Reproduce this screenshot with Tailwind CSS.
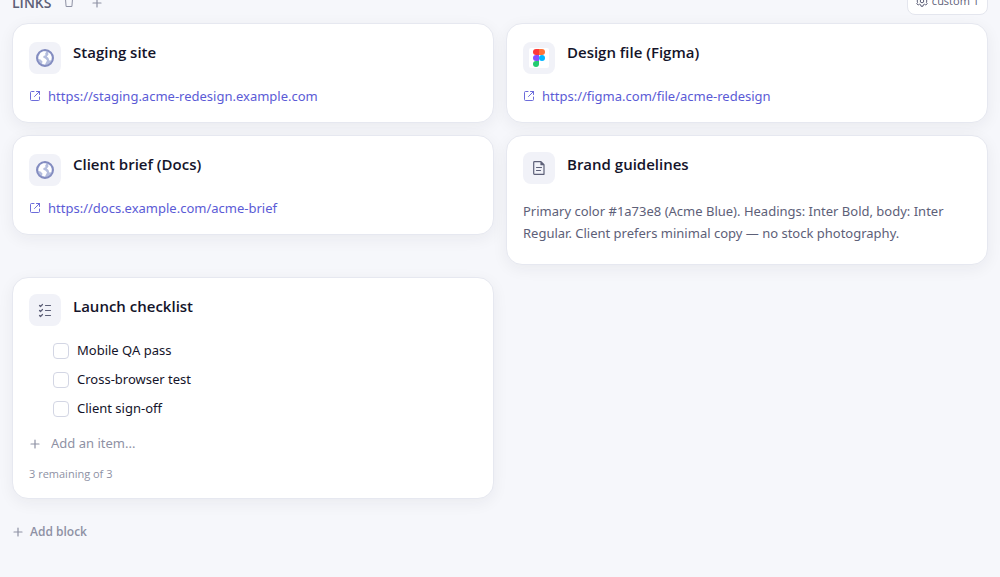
<!DOCTYPE html>
<html lang="en">
<head>
    <meta charset="UTF-8">
    <meta name="viewport" content="width=device-width, initial-scale=1.0">
    <title>Links</title>
    <script src="https://cdn.jsdelivr.net/npm/@tailwindcss/browser@4"></script>
</head>
<body class="bg-[#f6f7fb] font-['Noto_Sans','Open_Sans',sans-serif] min-h-screen overflow-x-hidden text-[#14142a]">
    <!-- shared icons -->
    <svg class="hidden">
        <symbol id="plus" viewBox="0 0 12 12">
            <path d="M6 2v8M2 6h8" fill="none" stroke="currentColor" stroke-width="1.2" stroke-linecap="round" />
        </symbol>
        <symbol id="external" viewBox="0 0 12 12">
            <path d="M5 1.500H2.500a1 1 0 0 0-1 1v7a1 1 0 0 0 1 1h7a1 1 0 0 0 1-1V7M7.500 1.500h3v3M10.500 1.500L5.500 6.500" fill="none" stroke="currentColor" stroke-width="0.9" stroke-linecap="round" stroke-linejoin="round" />
        </symbol>
        <symbol id="globe" viewBox="0 0 20 20">
            <circle cx="10" cy="10" r="8" fill="#b4bddd" stroke="#838cc0" stroke-width="2" />
            <path d="M3.500 8.500L5.500 4.800 8.500 3.200 11.500 3.500 10.200 5.500 10.500 7.200 8.500 8 8.200 9.500 10.500 10.800 12 12.500 11 14.500 10 16.500 7 15.800 7.500 13.500 5.500 11.500 3.500 11Z" fill="#fff" />
            <path d="M13 4.200L15.500 6 16.700 9 16.300 12.300 14.300 12.500 13.500 10 11.800 8.500 13.500 6.500Z" fill="#fff" />
        </symbol>
    </svg>

    <main class="-mt-[13px] px-3 pb-8">
        <header class="flex items-center justify-between h-7 mb-2">
            <div class="flex items-center pt-1 text-[#8e91a4]">
                <h2 class="font-['Open_Sans'] font-semibold text-[14px] leading-5 text-[#5d6078]">LINKS</h2>
                <button type="button" aria-label="Delete section" class="ml-3">
                    <svg class="size-3" viewBox="0 0 12 12" fill="none" stroke="currentColor" stroke-linecap="round" stroke-linejoin="round">
                        <path d="M1.500 2h9M4.500 2V1h3v1M2.500 2l.6 7.500h5.800L9.500 2" />
                    </svg>
                </button>
                <button type="button" aria-label="Add link" class="ml-4"><svg class="size-3"><use href="#plus" /></svg></button>
            </div>
            <button type="button" class="flex items-center gap-1 h-7 px-2 bg-white border border-[#e4e6ee] rounded-lg font-['Open_Sans'] text-[11px] font-medium text-[#5d6078]">
                <svg class="size-3" viewBox="0 0 24 24" fill="none" stroke="currentColor" stroke-width="2" stroke-linejoin="round">
                    <path d="M10 1.500h4l.7 3 2.300 1 2.700-1.600 2.700 2.800L20.800 9.300l.9 2.700-.9 2.700 1.600 2.600-2.700 2.800-2.700-1.600-2.300 1-.7 3h-4l-.7-3-2.300-1-2.700 1.600-2.700-2.800 1.600-2.600L2.300 12l.9-2.700-1.600-2.600 2.700-2.800L7 5.500l2.300-1z" />
                    <circle cx="12" cy="12" r="3.500" />
                </svg>
                custom 1
            </button>
        </header>

        <div class="grid grid-cols-2 gap-3 items-start">
            <article class="bg-white border border-[#e6e8f0] rounded-2xl p-4 shadow-[0_4px_16px_rgba(26,26,46,0.06)]">
                <div class="flex gap-3">
                    <span class="flex items-center justify-center size-8 mt-0.5 rounded-lg bg-[#f1f2f8]"><svg class="size-5"><use href="#globe" /></svg></span>
                    <h3 class="font-['Open_Sans'] font-semibold text-[15px] leading-6">Staging site</h3>
                </div>
                <a href="https://staging.acme-redesign.example.com" class="flex items-center gap-[7px] mt-3 text-[13px] leading-5 text-[#5b5bd6]">
                    <svg class="size-3"><use href="#external" /></svg>
                    https://staging.acme-redesign.example.com
                </a>
            </article>

            <article class="bg-white border border-[#e6e8f0] rounded-2xl p-4 shadow-[0_4px_16px_rgba(26,26,46,0.06)]">
                <div class="flex gap-3">
                    <span class="flex items-center justify-center size-8 mt-0.5 rounded-lg bg-[#f1f2f8]">
                        <svg class="size-5" viewBox="0 0 20 20">
                            <rect width="20" height="20" rx="2" fill="#fff" />
                            <path d="M10 1H7a3 3 0 0 0 0 6h3z" fill="#ff3737" />
                            <path d="M10 1h3a3 3 0 0 1 0 6h-3z" fill="#ff7237" />
                            <path d="M10 7H7a3 3 0 0 0 0 6h3z" fill="#874fff" />
                            <circle cx="13" cy="10" r="3" fill="#00b6ff" />
                            <path d="M10 13H7a3 3 0 1 0 3 3z" fill="#24cb71" />
                        </svg>
                    </span>
                    <h3 class="font-['Open_Sans'] font-semibold text-[15px] leading-6">Design file (Figma)</h3>
                </div>
                <a href="https://figma.com/file/acme-redesign" class="flex items-center gap-[7px] mt-3 text-[13px] leading-5 text-[#5b5bd6]">
                    <svg class="size-3"><use href="#external" /></svg>
                    https://figma.com/file/acme-redesign
                </a>
            </article>

            <article class="bg-white border border-[#e6e8f0] rounded-2xl p-4 shadow-[0_4px_16px_rgba(26,26,46,0.06)]">
                <div class="flex gap-3">
                    <span class="flex items-center justify-center size-8 mt-0.5 rounded-lg bg-[#f1f2f8]"><svg class="size-5"><use href="#globe" /></svg></span>
                    <h3 class="font-['Open_Sans'] font-semibold text-[15px] leading-6">Client brief (Docs)</h3>
                </div>
                <a href="https://docs.example.com/acme-brief" class="flex items-center gap-[7px] mt-3 text-[13px] leading-5 text-[#5b5bd6]">
                    <svg class="size-3"><use href="#external" /></svg>
                    https://docs.example.com/acme-brief
                </a>
            </article>

            <article class="bg-white border border-[#e6e8f0] rounded-2xl p-4 shadow-[0_4px_16px_rgba(26,26,46,0.06)]">
                <div class="flex gap-3">
                    <span class="flex items-center justify-center size-8 rounded-lg bg-[#f1f2f8] text-[#5d6078]">
                        <svg class="size-4" viewBox="0 0 16 16" fill="none" stroke="currentColor" stroke-width="1.2" stroke-linecap="round" stroke-linejoin="round">
                            <path d="M3.500 1.700h6.500l3 3v9.600H3.500a.8.8 0 0 1-.8-.8v-11a.8.8 0 0 1 .8-.8zM10 1.700v3h3M5.500 7.500h5M5.500 10.500h4" />
                        </svg>
                    </span>
                    <h3 class="font-['Open_Sans'] font-semibold text-[15px] leading-6">Brand guidelines</h3>
                </div>
                <p class="mt-4 mb-1 text-[13px] leading-[22px] text-[#5d6078]">Primary color #1a73e8 (Acme Blue). Headings: Inter Bold, body: Inter Regular. Client prefers minimal copy — no stock photography.</p>
            </article>

            <article class="bg-white border border-[#e6e8f0] rounded-2xl p-4 shadow-[0_4px_16px_rgba(26,26,46,0.06)]">
                <div class="flex gap-3">
                    <span class="flex items-center justify-center size-8 rounded-lg bg-[#f1f2f8] text-[#5d6078]">
                        <svg class="size-4" viewBox="0 0 16 16" fill="none" stroke="currentColor" stroke-width="1.2" stroke-linecap="round" stroke-linejoin="round">
                            <path d="M2.500 3.500l1 1 2-2M2.500 8.500l1 1 2-2M2.500 13.500l1 1 2-2M8.500 3.500h5M8.500 8.500h5M8.500 13.500h5" />
                        </svg>
                    </span>
                    <h3 class="font-['Open_Sans'] font-semibold text-[15px] leading-6">Launch checklist</h3>
                </div>
                <ul class="mt-2.5 pl-6 text-[13px]">
                    <li><label class="flex items-center gap-2 h-[29px]"><input type="checkbox" class="appearance-none size-4 border border-[#d3d6e4] rounded-sm checked:bg-[#5b5bd6]">Mobile QA pass</label></li>
                    <li><label class="flex items-center gap-2 h-[29px]"><input type="checkbox" class="appearance-none size-4 border border-[#d3d6e4] rounded-sm checked:bg-[#5b5bd6]">Cross-browser test</label></li>
                    <li><label class="flex items-center gap-2 h-[29px]"><input type="checkbox" class="appearance-none size-4 border border-[#d3d6e4] rounded-sm checked:bg-[#5b5bd6]">Client sign-off</label></li>
                </ul>
                <div class="flex items-center gap-2.5 h-[29px] mt-1.5 text-[13px] text-[#8e91a4]">
                    <svg class="size-3"><use href="#plus" /></svg>
                    <input type="text" aria-label="Add an item" placeholder="Add an item..." class="grow outline-none placeholder:text-[#8e91a4]">
                </div>
                <p class="mt-2 font-['Open_Sans'] text-[11px] leading-4 text-[#8e91a4]">3 remaining of 3</p>
            </article>
        </div>

        <button type="button" class="flex items-center gap-1.5 h-[26px] mt-5 font-['Open_Sans'] text-[12px] font-semibold text-[#8e91a4]">
            <svg class="size-3"><use href="#plus" /></svg>
            Add block
        </button>
    </main>
</body>
</html>
